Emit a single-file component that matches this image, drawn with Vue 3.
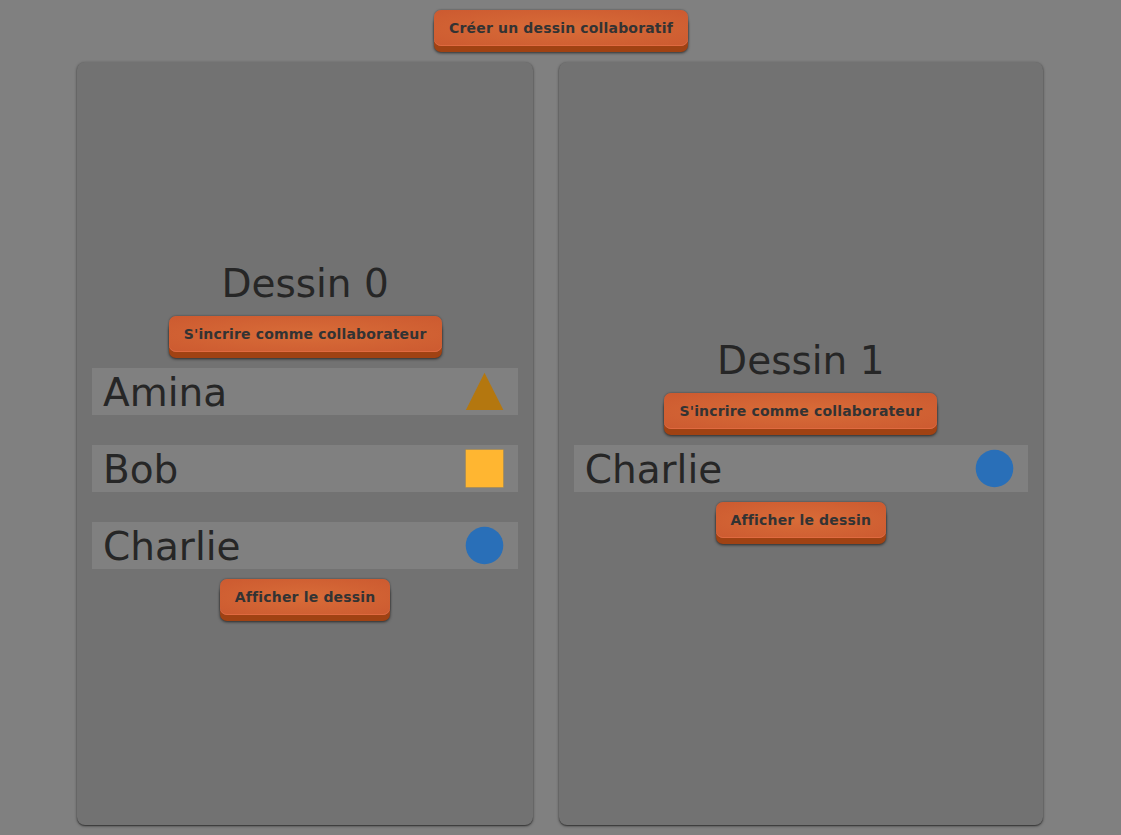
<script setup>
const drawings = [
  {
    id: 0,
    people: [
      { name: 'Amina', shape: 'triangle' },
      { name: 'Bob', shape: 'square' },
      { name: 'Charlie', shape: 'circle' },
    ],
  },
  { id: 1, people: [{ name: 'Charlie', shape: 'circle' }] },
]
</script>

<template>
  <main class="page">
    <button class="btn">Créer un dessin collaboratif</button>
    <div class="cards">
      <section v-for="d in drawings" :key="d.id" class="card" :class="'card-' + d.id">
        <div class="title">Dessin {{ d.id }}</div>
        <button class="btn">S'incrire comme collaborateur</button>
        <ul class="people">
          <li v-for="p in d.people" :key="p.name" class="person">
            <span>{{ p.name }}</span>
            <svg class="shape" width="40" height="40" viewBox="0 0 40 40">
              <path v-if="p.shape === 'triangle'" d="M19.5 .7L38.4 38H.9Z" fill="#b4770f" />
              <rect v-else-if="p.shape === 'square'" x=".6" y=".6" width="37.8" height="37.8" fill="#ffb631" stroke="#a08450" stroke-width=".4" />
              <circle v-else cx="19.5" cy="19.5" r="18.8" fill="#296fb8" />
            </svg>
          </li>
        </ul>
        <button class="btn">Afficher le dessin</button>
      </section>
    </div>
  </main>
</template>

<style>
body {
  background: #808080;
}
</style>

<style scoped>
.page {
  box-sizing: border-box;
  height: 835px;
  padding: 10px 76px 10px 77px;
  display: flex;
  flex-direction: column;
  align-items: center;
  font-family: "DejaVu Sans", sans-serif;
  color: #262626;
  overflow: hidden;
}
.btn {
  box-sizing: border-box;
  flex: none;
  height: 36px;
  padding: 0 15px;
  border: 0;
  border-radius: 7px;
  font: bold 14px/36px "DejaVu Sans", sans-serif;
  letter-spacing: 0.17px;
  color: #333;
  white-space: nowrap;
  background: radial-gradient(#d86c38, #cc5a30);
  box-shadow: inset 0 -1px 0 #e06a40, 0 6px 0 #a04213, 0 7px 3px rgba(0, 0, 0, .65), 0 0 2px rgba(0, 0, 0, .5);
}
.cards {
  width: 966px;
  flex: 1;
  align-self: flex-start;
  margin: 16px 0 0;
  display: flex;
  gap: 25.5px;
}
.card {
  box-sizing: border-box;
  display: flex;
  flex-direction: column;
  align-items: center;
  justify-content: center;
  padding: 0 15px;
  border-radius: 8px;
  background: #727272;
  box-shadow: 0 1px 3px rgba(0, 0, 0, .5), 0 1px 1px rgba(0, 0, 0, .3);
}
.card-0 {
  width: 456.2px;
}
.card-1 {
  width: 484.3px;
}
.title {
  font-size: 39px;
  line-height: 48px;
  margin-bottom: 8px;
}
.people {
  align-self: stretch;
  margin: 16px 0 10px;
  padding: 0;
  list-style: none;
  display: grid;
  gap: 30px;
}
.person {
  height: 47px;
  box-sizing: border-box;
  padding: 0 13.3px 0 11px;
  display: flex;
  justify-content: space-between;
  background: #808080;
  font-size: 39px;
  line-height: 49px;
}
.shape {
  margin-top: 4px;
}
.card > .btn:last-child {
  margin-bottom: 12px;
}
</style>
